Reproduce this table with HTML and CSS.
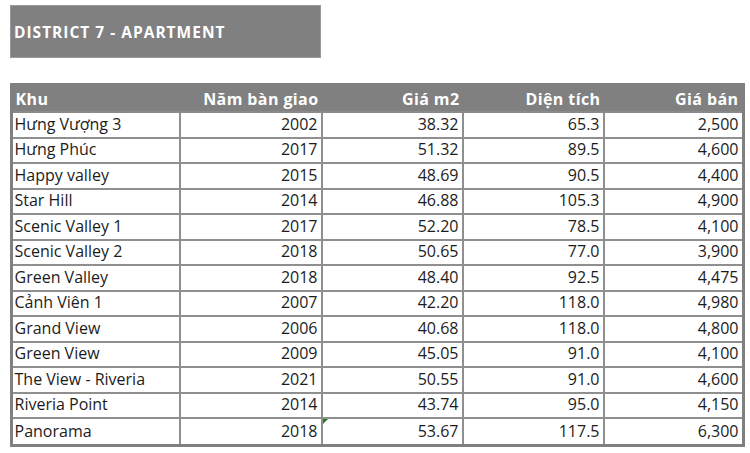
FILE: index.html
```html
<!DOCTYPE html>
<html lang="vi">
<head>
<meta charset="utf-8">
<title>District 7 - Apartment</title>
<link rel="stylesheet" href="styles.css">
</head>
<body>
<div class="title">DISTRICT 7 - APARTMENT</div>
<table class="grid">
  <colgroup>
    <col class="c1"><col class="c2"><col class="c3"><col class="c4"><col class="c5">
  </colgroup>
  <thead>
    <tr><th class="l">Khu</th><th>Năm bàn giao</th><th>Giá m2</th><th>Diện tích</th><th>Giá bán</th></tr>
  </thead>
  <tbody>
    <tr><td class="l">Hưng Vượng 3</td><td>2002</td><td>38.32</td><td>65.3</td><td>2,500</td></tr>
    <tr><td class="l">Hưng Phúc</td><td>2017</td><td>51.32</td><td>89.5</td><td>4,600</td></tr>
    <tr><td class="l">Happy valley</td><td>2015</td><td>48.69</td><td>90.5</td><td>4,400</td></tr>
    <tr><td class="l">Star Hill</td><td>2014</td><td>46.88</td><td>105.3</td><td>4,900</td></tr>
    <tr><td class="l">Scenic Valley 1</td><td>2017</td><td>52.20</td><td>78.5</td><td>4,100</td></tr>
    <tr><td class="l">Scenic Valley 2</td><td>2018</td><td>50.65</td><td>77.0</td><td>3,900</td></tr>
    <tr><td class="l">Green Valley</td><td>2018</td><td>48.40</td><td>92.5</td><td>4,475</td></tr>
    <tr><td class="l">Cảnh Viên 1</td><td>2007</td><td>42.20</td><td>118.0</td><td>4,980</td></tr>
    <tr><td class="l">Grand View</td><td>2006</td><td>40.68</td><td>118.0</td><td>4,800</td></tr>
    <tr><td class="l">Green View</td><td>2009</td><td>45.05</td><td>91.0</td><td>4,100</td></tr>
    <tr><td class="l">The View - Riveria</td><td>2021</td><td>50.55</td><td>91.0</td><td>4,600</td></tr>
    <tr><td class="l">Riveria Point</td><td>2014</td><td>43.74</td><td>95.0</td><td>4,150</td></tr>
    <tr class="last"><td class="l">Panorama</td><td>2018</td><td class="flag">53.67</td><td>117.5</td><td>6,300</td></tr>
  </tbody>
</table>
</body>
</html>
```
FILE: styles.css
```css
html, body {
  margin: 0;
  padding: 0;
  background: #ffffff;
}
body {
  font-family: "Open Sans", "Liberation Sans", sans-serif;
  color: #1c1c1c;
}
.title {
  margin: 5px 0 0 10px;
  width: 306px;
  height: 51px;
  padding-left: 3px;
  background: #808080;
  border: 1px solid #9a9a9a;
  color: #ffffff;
  font-weight: 700;
  font-size: 15.5px;
  letter-spacing: 1px;
  display: flex;
  align-items: center;
  box-sizing: content-box;
}
.grid {
  margin: 25px 0 0 9.5px;
  width: 732px;
  table-layout: fixed;
  border-collapse: collapse;
  border: 3px solid #808080;
  font-size: 16px;
}
.c1 { width: 168.5px; }
.c2 { width: 142px; }
.c3 { width: 141px; }
.c4 { width: 141px; }
.c5 { width: 139.5px; }
.grid th {
  background: #808080;
  color: #ffffff;
  font-weight: 700;
  letter-spacing: 0.4px;
  text-align: right;
  height: 25px;
  padding: 0 3px 0 3px;
  border: none;
  border-bottom: 2px solid #8a8a8a;
  white-space: nowrap;
}
.grid td {
  height: 21.5px;
  padding: 0 3px 2px 2px;
  text-align: right;
  border: 2px solid #8f8f8f;
  white-space: nowrap;
  line-height: 1;
}
.grid th.l, .grid td.l {
  text-align: left;
}
.grid tr.last td {
  height: 23px;
}
.grid td.flag {
  position: relative;
}
.grid td.flag::before {
  content: "";
  position: absolute;
  left: 0;
  top: 0;
  border-style: solid;
  border-width: 5px 5px 0 0;
  border-color: #1e7b1e transparent transparent transparent;
}
```
